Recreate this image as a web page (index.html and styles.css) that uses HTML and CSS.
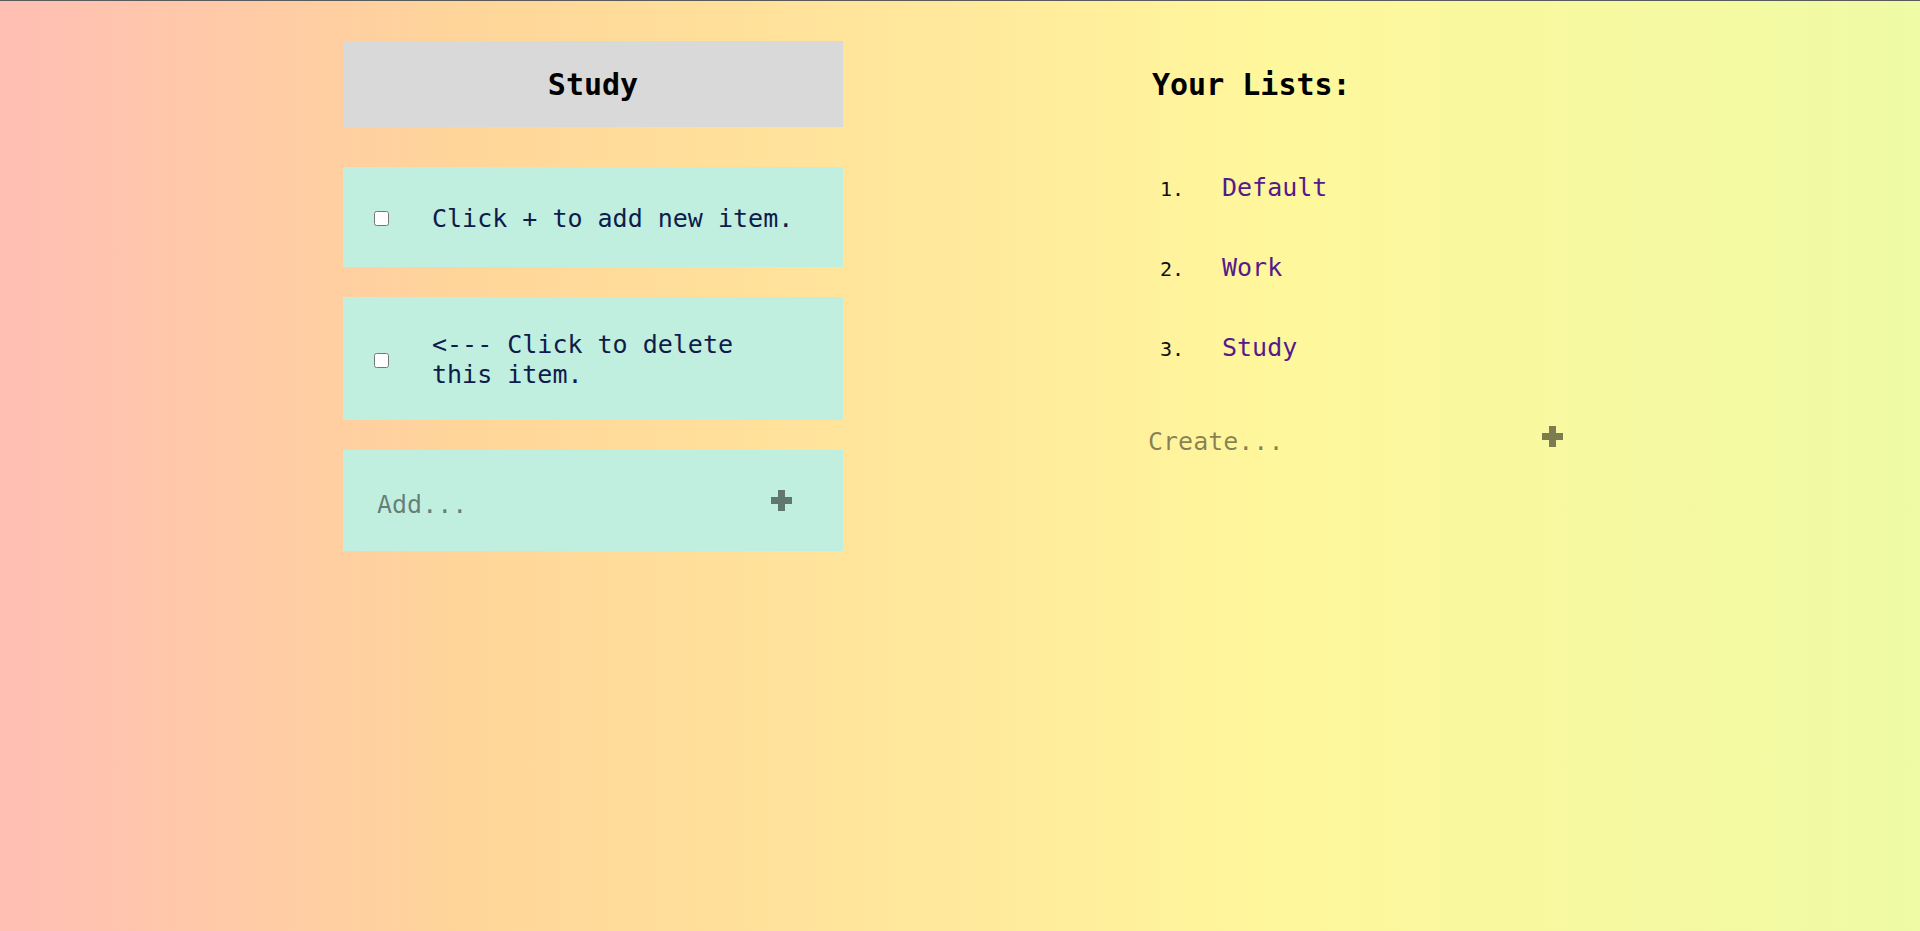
FILE: index.html
```html
<!DOCTYPE html>
<html lang="en">
<head>
<meta charset="utf-8">
<title>To-Do List</title>
<link rel="stylesheet" href="styles.css">
</head>
<body>
<main class="page">
  <section class="todo">
    <div class="todo-header"><h1>Study</h1></div>
    <form class="item">
      <input type="checkbox" class="check">
      <p class="item-text">Click + to add new item.</p>
    </form>
    <form class="item">
      <input type="checkbox" class="check">
      <p class="item-text">&lt;--- Click to delete this item.</p>
    </form>
    <form class="item add-item">
      <input type="text" class="text-input" placeholder="Add...">
      <button type="button" class="plus-btn" aria-label="Add">
        <svg width="21" height="21" viewBox="0 0 21 21"><path d="M7 0h7v7h7v7h-7v7H7v-7H0V7h7z" fill="rgba(0,0,0,0.5)"/></svg>
      </button>
    </form>
  </section>
  <aside class="lists">
    <div class="lists-header"><h2>Your Lists:</h2></div>
    <ol class="list-links">
      <li><a href="#">Default</a></li>
      <li><a href="#">Work</a></li>
      <li><a href="#">Study</a></li>
    </ol>
    <form class="create-row">
      <input type="text" class="text-input" placeholder="Create...">
      <button type="button" class="plus-btn" aria-label="Create">
        <svg width="21" height="21" viewBox="0 0 21 21"><path d="M7 0h7v7h7v7h-7v7H7v-7H0V7h7z" fill="rgba(0,0,0,0.5)"/></svg>
      </button>
    </form>
  </aside>
</main>
</body>
</html>
```

FILE: styles.css
```css
* { box-sizing: border-box; }

html, body {
  margin: 0;
  padding: 0;
}

body {
  min-height: 100vh;
  border-top: 1px solid #5b5b5b;
  background: linear-gradient(90deg, #ffbfb4 0%, #ffd699 25%, #ffe99c 50%, #fff79c 66%, #effba5 100%);
  font-family: "DejaVu Sans Mono", "Liberation Mono", monospace;
  color: #000;
}

.page {
  display: flex;
  align-items: flex-start;
  padding: 40px 0 0 343px;
  gap: 305px;
}

.todo {
  width: 500px;
  display: flex;
  flex-direction: column;
}

.todo-header {
  height: 86px;
  padding-top: 2px;
  background: #d9d9d9;
  display: flex;
  align-items: center;
  justify-content: center;
  margin-bottom: 40px;
}

.todo-header h1,
.lists-header h2 {
  margin: 0;
  font-size: 30px;
  font-weight: bold;
  line-height: 1;
}

.item {
  margin: 0 0 30px 0;
  min-height: 100px;
  padding: 33px 45px 30px 31px;
  background: #c0eedf;
  display: flex;
  align-items: center;
}

.check {
  width: 15px;
  height: 15px;
  margin: 0 43px 0 0;
  flex: none;
}

.item-text {
  margin: 0;
  flex: 1;
  font-size: 25px;
  line-height: 30px;
  color: #0e1b4b;
}

.add-item {
  padding: 0 51px 0 34px;
  height: 101px;
  min-height: 0;
}

.text-input {
  flex: 1;
  min-width: 0;
  border: none;
  outline: none;
  background: transparent;
  padding: 0;
  font-family: "DejaVu Sans Mono", "Liberation Mono", monospace;
  font-size: 25px;
  color: #333;
}

.add-item .text-input {
  margin-top: 8px;
}

.text-input::placeholder {
  color: rgba(0, 0, 0, 0.48);
}

.plus-btn {
  flex: none;
  border: none;
  background: none;
  padding: 0;
  width: 21px;
  height: 21px;
  display: flex;
  cursor: pointer;
}

.lists {
  width: 415px;
  display: flex;
  flex-direction: column;
}

.lists-header {
  height: 86px;
  padding-top: 2px;
  display: flex;
  align-items: center;
  padding-left: 4px;
}

.list-links {
  list-style: none;
  counter-reset: item;
  margin: 21px 0 0 0;
  padding: 0 0 0 12px;
}

.list-links li {
  counter-increment: item;
  height: 80px;
  line-height: 80px;
  display: flex;
  align-items: baseline;
  font-size: 25px;
}

.list-links li::before {
  content: counter(item) ".";
  width: 62px;
  font-size: 20px;
  color: #111;
}

.list-links a {
  color: #551a8b;
  text-decoration: none;
}

.create-row {
  margin-top: 33px;
  height: 40px;
  display: flex;
  align-items: center;
}

.create-row .plus-btn {
  margin-bottom: 10px;
}
```
